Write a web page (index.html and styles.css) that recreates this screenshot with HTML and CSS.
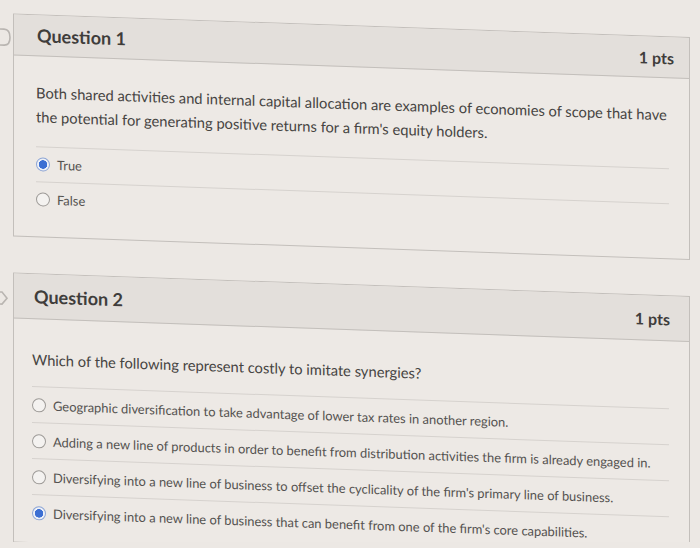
FILE: index.html
```html
<!DOCTYPE html>
<html lang="en">
<head>
<meta charset="utf-8">
<title>Quiz</title>
<link rel="stylesheet" href="styles.css">
</head>
<body>
<main class="page">
  <section class="question q1">
    <div class="flag">
      <svg width="14" height="20" viewBox="0 0 14 20"><path d="M-14 2 H4 Q10 2 10 10 Q10 18 4 18 H-14" fill="none" stroke="#b9b5b1" stroke-width="1.6"/></svg>
    </div>
    <div class="card">
      <header class="card-head">
        <h2 class="title">Question 1</h2>
        <span class="pts">1 pts</span>
      </header>
      <div class="card-body">
        <p class="prompt">Both shared activities and internal capital allocation are examples of economies of scope that have the potential for generating positive returns for a firm's equity holders.</p>
        <ul class="answers">
          <li class="answer"><span class="radio checked"></span>True</li>
          <li class="answer"><span class="radio"></span>False</li>
        </ul>
      </div>
    </div>
  </section>

  <section class="question q2">
    <div class="flag">
      <svg width="14" height="20" viewBox="0 0 14 20"><path d="M-14 4 H2 L7 10 L2 16 H-14" fill="none" stroke="#b9b5b1" stroke-width="1.6"/></svg>
    </div>
    <div class="card">
      <header class="card-head">
        <h2 class="title">Question 2</h2>
        <span class="pts">1 pts</span>
      </header>
      <div class="card-body">
        <p class="prompt">Which of the following represent costly to imitate synergies?</p>
        <ul class="answers">
          <li class="answer"><span class="radio"></span>Geographic diversification to take advantage of lower tax rates in another region.</li>
          <li class="answer"><span class="radio"></span>Adding a new line of products in order to benefit from distribution activities the firm is already engaged in.</li>
          <li class="answer"><span class="radio"></span>Diversifying into a new line of business to offset the cyclicality of the firm's primary line of business.</li>
          <li class="answer"><span class="radio checked"></span>Diversifying into a new line of business that can benefit from one of the firm's core capabilities.</li>
        </ul>
      </div>
    </div>
  </section>
</main>
</body>
</html>
```

FILE: styles.css
```css
html, body {
  margin: 0;
  padding: 0;
  overflow: hidden;
  background: #ece8e4;
}

body {
  font-family: Lato, "Open Sans", "Liberation Sans", sans-serif;
  color: #4d4b49;
}

.page {
  padding-top: 13px;
  transform: skewY(2deg);
  transform-origin: 0 0;
}

.question {
  display: flex;
  align-items: flex-start;
}

.q2 {
  margin-top: 36px;
}

.flag {
  width: 13px;
  flex: none;
  overflow: hidden;
}

.q1 .flag { padding-top: 14px; }
.q2 .flag { padding-top: 16px; }

.flag svg { display: block; }

.card {
  width: 675px;
  border: 1px solid #c3bfbb;
  background: #ede9e5;
}

.card-head {
  display: flex;
  justify-content: space-between;
  align-items: center;
  height: 40px;
  padding: 0 15px 0 23px;
  background: #e3dfdb;
  border-bottom: 1px solid #c3bfbb;
}

.q2 .card-head {
  height: 44px;
  padding-left: 20px;
  padding-right: 19px;
}

.title {
  margin: 0;
  font-size: 18px;
  font-weight: 700;
  color: #3f3d3b;
}

.pts {
  font-size: 16px;
  font-weight: 700;
  color: #3f3d3b;
}

.card-body {
  padding: 24px 20px 20px 22px;
}

.q2 .card-body {
  padding: 28px 20px 12px 18px;
}

.prompt {
  margin: 0 0 18px;
  font-size: 14.7px;
  line-height: 24px;
  color: #464442;
}

.q2 .prompt {
  margin-bottom: 15px;
}

.answers {
  list-style: none;
  margin: 0;
  padding: 0;
}

.answer {
  display: flex;
  align-items: center;
  gap: 7px;
  height: 34px;
  border-top: 1px solid #d6d2ce;
  font-size: 12.9px;
  color: #545250;
}

.q2 .answer {
  height: 35px;
}

.radio {
  width: 12px;
  height: 12px;
  border: 1px solid #9d9a97;
  border-radius: 50%;
  background: #f4f2f0;
  flex: none;
}

.radio.checked {
  border-color: #8ea6d6;
  background: radial-gradient(circle, #3c6fd3 0 4px, #eef1f7 4.5px);
}
```
